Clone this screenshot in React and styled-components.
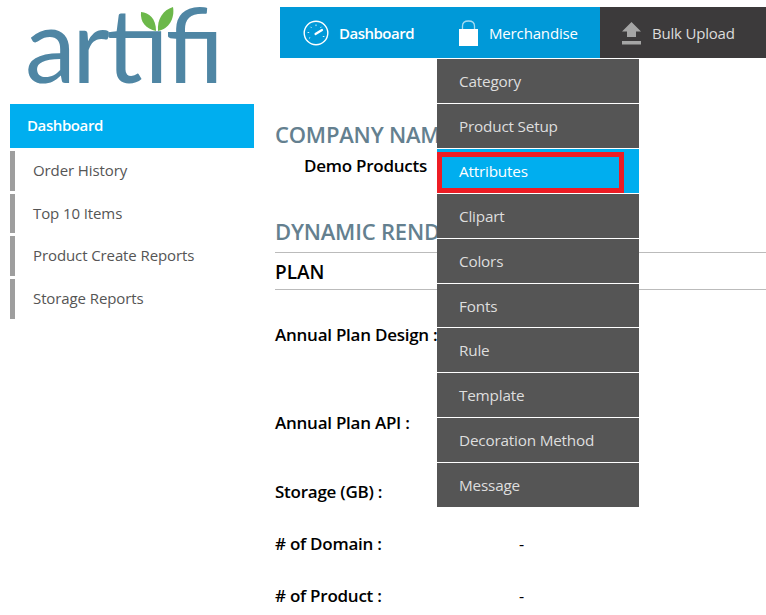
import React from "react";
import styled, { createGlobalStyle } from "styled-components";

const sideLinks = ["Order History", "Top 10 Items", "Product Create Reports", "Storage Reports"];
const menuItems = ["Category", "Product Setup", "Attributes", "Clipart", "Colors", "Fonts", "Rule", "Template", "Decoration Method", "Message"];
const planRows = [
  { label: "Annual Plan Design :", height: 88 },
  { label: "Annual Plan API :", height: 69 },
  { label: "Storage (GB) :", height: 52 },
  { label: "# of Domain :", height: 52, value: "-" },
  { label: "# of Product :", height: 52, value: "-" },
];

const Logo = () => (
  <LogoBox>
    <LogoSvg viewBox="0 0 244 104">
      <LogoWord x="15" y="83" textLength="199" lengthAdjust="spacing">
        artifi
      </LogoWord>
      <rect x="132" y="4" width="34" height="26" fill="#fff" />
      <path d="M146 31C136 29 130 22 131 12C139 13 146 18 146 31Z" fill="#6cb84a" />
      <path d="M148 31C147 19 153 10 163 7C165 18 159 29 148 31Z" fill="#6cb84a" />
    </LogoSvg>
  </LogoBox>
);

const GaugeIcon = () => (
  <svg width="26" height="26" viewBox="0 0 26 26" fill="none" stroke="#fff">
    <circle cx="13" cy="13" r="11.8" strokeWidth="1.4" />
    <path d="M12.5 14L19 10" strokeWidth="2.2" strokeLinecap="round" />
    <path d="M13 4.5v1.6M7.5 6.8l1 1M4.6 12.5h1.6M6 18.3l1.2-.7M18.5 6.8l-1 1M21.4 16.5h-1.6" strokeWidth="1" opacity="0.85" />
  </svg>
);

const BagIcon = () => (
  <svg width="19" height="26" viewBox="0 0 19 26">
    <path d="M3.5 9V6C3.5 2.8 6 1 9.5 1S15.5 2.8 15.5 6V9" fill="none" stroke="#fff" strokeWidth="1.3" opacity="0.65" />
    <rect y="9" width="19" height="17" fill="#fff" />
  </svg>
);

const UploadIcon = () => (
  <svg width="19" height="24" viewBox="0 0 19 24" fill="#a5a5a5">
    <path d="M9.5 1L19 10.5H14V16H5V10.5H0Z" />
    <rect y="20" width="19" height="3.5" />
  </svg>
);

export default function App() {
  return (
    <Page>
      <GlobalStyle />
      <Sidebar>
        <Logo />
        <SideTitle>Dashboard</SideTitle>
        <SideList>
          {sideLinks.map((link) => (
            <SideItem key={link}>{link}</SideItem>
          ))}
        </SideList>
      </Sidebar>
      <Main>
        <TopNav>
          <NavBlue>
            <NavItem $width={158} $pad={23} $gap={10} $bold>
              <GaugeIcon />
              Dashboard
            </NavItem>
            <NavItem $width={162} $pad={21} $gap={11}>
              <BagIcon />
              Merchandise
            </NavItem>
          </NavBlue>
          <NavDark>
            <UploadIcon />
            Bulk Upload
          </NavDark>
          <Dropdown>
            {menuItems.map((item) => (
              <MenuItem key={item} $active={item === "Attributes"}>
                {item}
              </MenuItem>
            ))}
          </Dropdown>
        </TopNav>
        <Content>
          <SectionTitle>COMPANY NAME</SectionTitle>
          <CompanyName>Demo Products</CompanyName>
          <DynamicTitle>DYNAMIC RENDERING</DynamicTitle>
          <PlanTitle>PLAN</PlanTitle>
          {planRows.map((row) => (
            <PlanRow key={row.label} $height={row.height}>
              <PlanLabel>{row.label}</PlanLabel>
              {row.value && <PlanValue>{row.value}</PlanValue>}
            </PlanRow>
          ))}
        </Content>
      </Main>
    </Page>
  );
}

const GlobalStyle = createGlobalStyle`
  html, body {
    margin: 0;
    padding: 0;
    width: 766px;
    height: 615px;
    overflow: hidden;
    background: #fff;
    font-family: "Open Sans", "Noto Sans", sans-serif;
  }
`;

const Page = styled.div`
  display: flex;
  width: 766px;
  height: 615px;
  overflow: hidden;
`;

const Sidebar = styled.aside`
  width: 244px;
  margin-left: 10px;
  flex-shrink: 0;
`;

const LogoBox = styled.div`
  height: 104px;
`;

const LogoSvg = styled.svg`
  display: block;
  width: 244px;
  height: 104px;
`;

const LogoWord = styled.text`
  font-family: "Lato", sans-serif;
  font-size: 102px;
  fill: #4f86a4;
`;

const SideTitle = styled.div`
  height: 44px;
  padding-left: 17px;
  background: #00aeef;
  color: #fff;
  font-size: 15px;
  font-weight: 600;
  line-height: 43px;
  letter-spacing: -0.4px;
`;

const SideList = styled.ul`
  list-style: none;
  margin: 3px 0 0;
  padding: 0;
`;

const SideItem = styled.li`
  height: 39.67px;
  margin-bottom: 3px;
  padding-left: 18px;
  border-left: 5px solid #9e9e9e;
  box-shadow: inset 1px -1px 0 #fff, inset 0 -1px 0 #b5b5b5;
  color: #555;
  font-size: 15px;
  line-height: 39px;
  letter-spacing: -0.1px;
`;

const Main = styled.main`
  flex: 1;
  min-width: 0;
  margin-left: 21px;
`;

const TopNav = styled.nav`
  position: relative;
  display: flex;
  height: 51px;
  margin: 7px 0 0 5px;
  font-size: 15px;
  letter-spacing: -0.2px;
`;

const NavBlue = styled.div`
  display: flex;
  width: 320px;
  background: #0099d8;
`;

const NavItem = styled.div`
  display: flex;
  align-items: center;
  gap: ${(p) => p.$gap}px;
  width: ${(p) => p.$width}px;
  padding-left: ${(p) => p.$pad}px;
  box-sizing: border-box;
  color: #fff;
  font-weight: ${(p) => (p.$bold ? 600 : 400)};
  letter-spacing: ${(p) => (p.$bold ? "-0.5px" : "-0.15px")};
`;

const NavDark = styled.div`
  display: flex;
  flex: 1;
  align-items: center;
  gap: 11px;
  padding-left: 22px;
  background: #3c3a3b;
  color: #dcdcdc;
`;

const Dropdown = styled.ul`
  position: absolute;
  z-index: 2;
  left: 157px;
  top: 52.15px;
  width: 202px;
  margin: 0;
  padding: 0;
  list-style: none;
  background: #fff;
`;

const MenuItem = styled.li`
  position: relative;
  height: 43.9px;
  margin-bottom: 1px;
  padding-left: 22px;
  background: ${(p) => (p.$active ? "#00aeef" : "#555")};
  color: ${(p) => (p.$active ? "#fff" : "#dedede")};
  font-size: 15.3px;
  line-height: 44px;
  letter-spacing: -0.2px;

  ${(p) =>
    p.$active &&
    `&::after {
      content: "";
      position: absolute;
      left: 0;
      top: 3px;
      width: 177px;
      height: 31px;
      border: 5px solid #ed1c24;
    }`}
`;

const Content = styled.section`
  padding-top: 61px;
  color: #000;
`;

const SectionTitle = styled.h2`
  margin: 0;
  color: #64808f;
  font-size: 22px;
  font-weight: 600;
  line-height: 30px;
  letter-spacing: -0.2px;
  white-space: nowrap;
`;

const CompanyName = styled.div`
  padding-left: 29px;
  font-size: 17px;
  font-weight: 600;
  line-height: 34px;
  letter-spacing: -0.25px;
`;

const DynamicTitle = styled(SectionTitle)`
  margin-top: 33px;
  padding-bottom: 6px;
  border-bottom: 1px solid #bbb;
`;

const PlanTitle = styled.div`
  padding: 4px 0 2px;
  border-bottom: 1px solid #bbb;
  font-size: 19px;
  font-weight: 600;
  line-height: 30px;
`;

const PlanRow = styled.div`
  display: flex;
  align-items: flex-start;
  height: ${(p) => p.$height}px;
`;

const PlanLabel = styled.div`
  width: 244px;
  padding-top: 33px;
  font-size: 17px;
  font-weight: 600;
  line-height: 24px;
  letter-spacing: -0.25px;
  white-space: nowrap;
`;

const PlanValue = styled.div`
  padding-top: 33px;
  line-height: 24px;
`;
